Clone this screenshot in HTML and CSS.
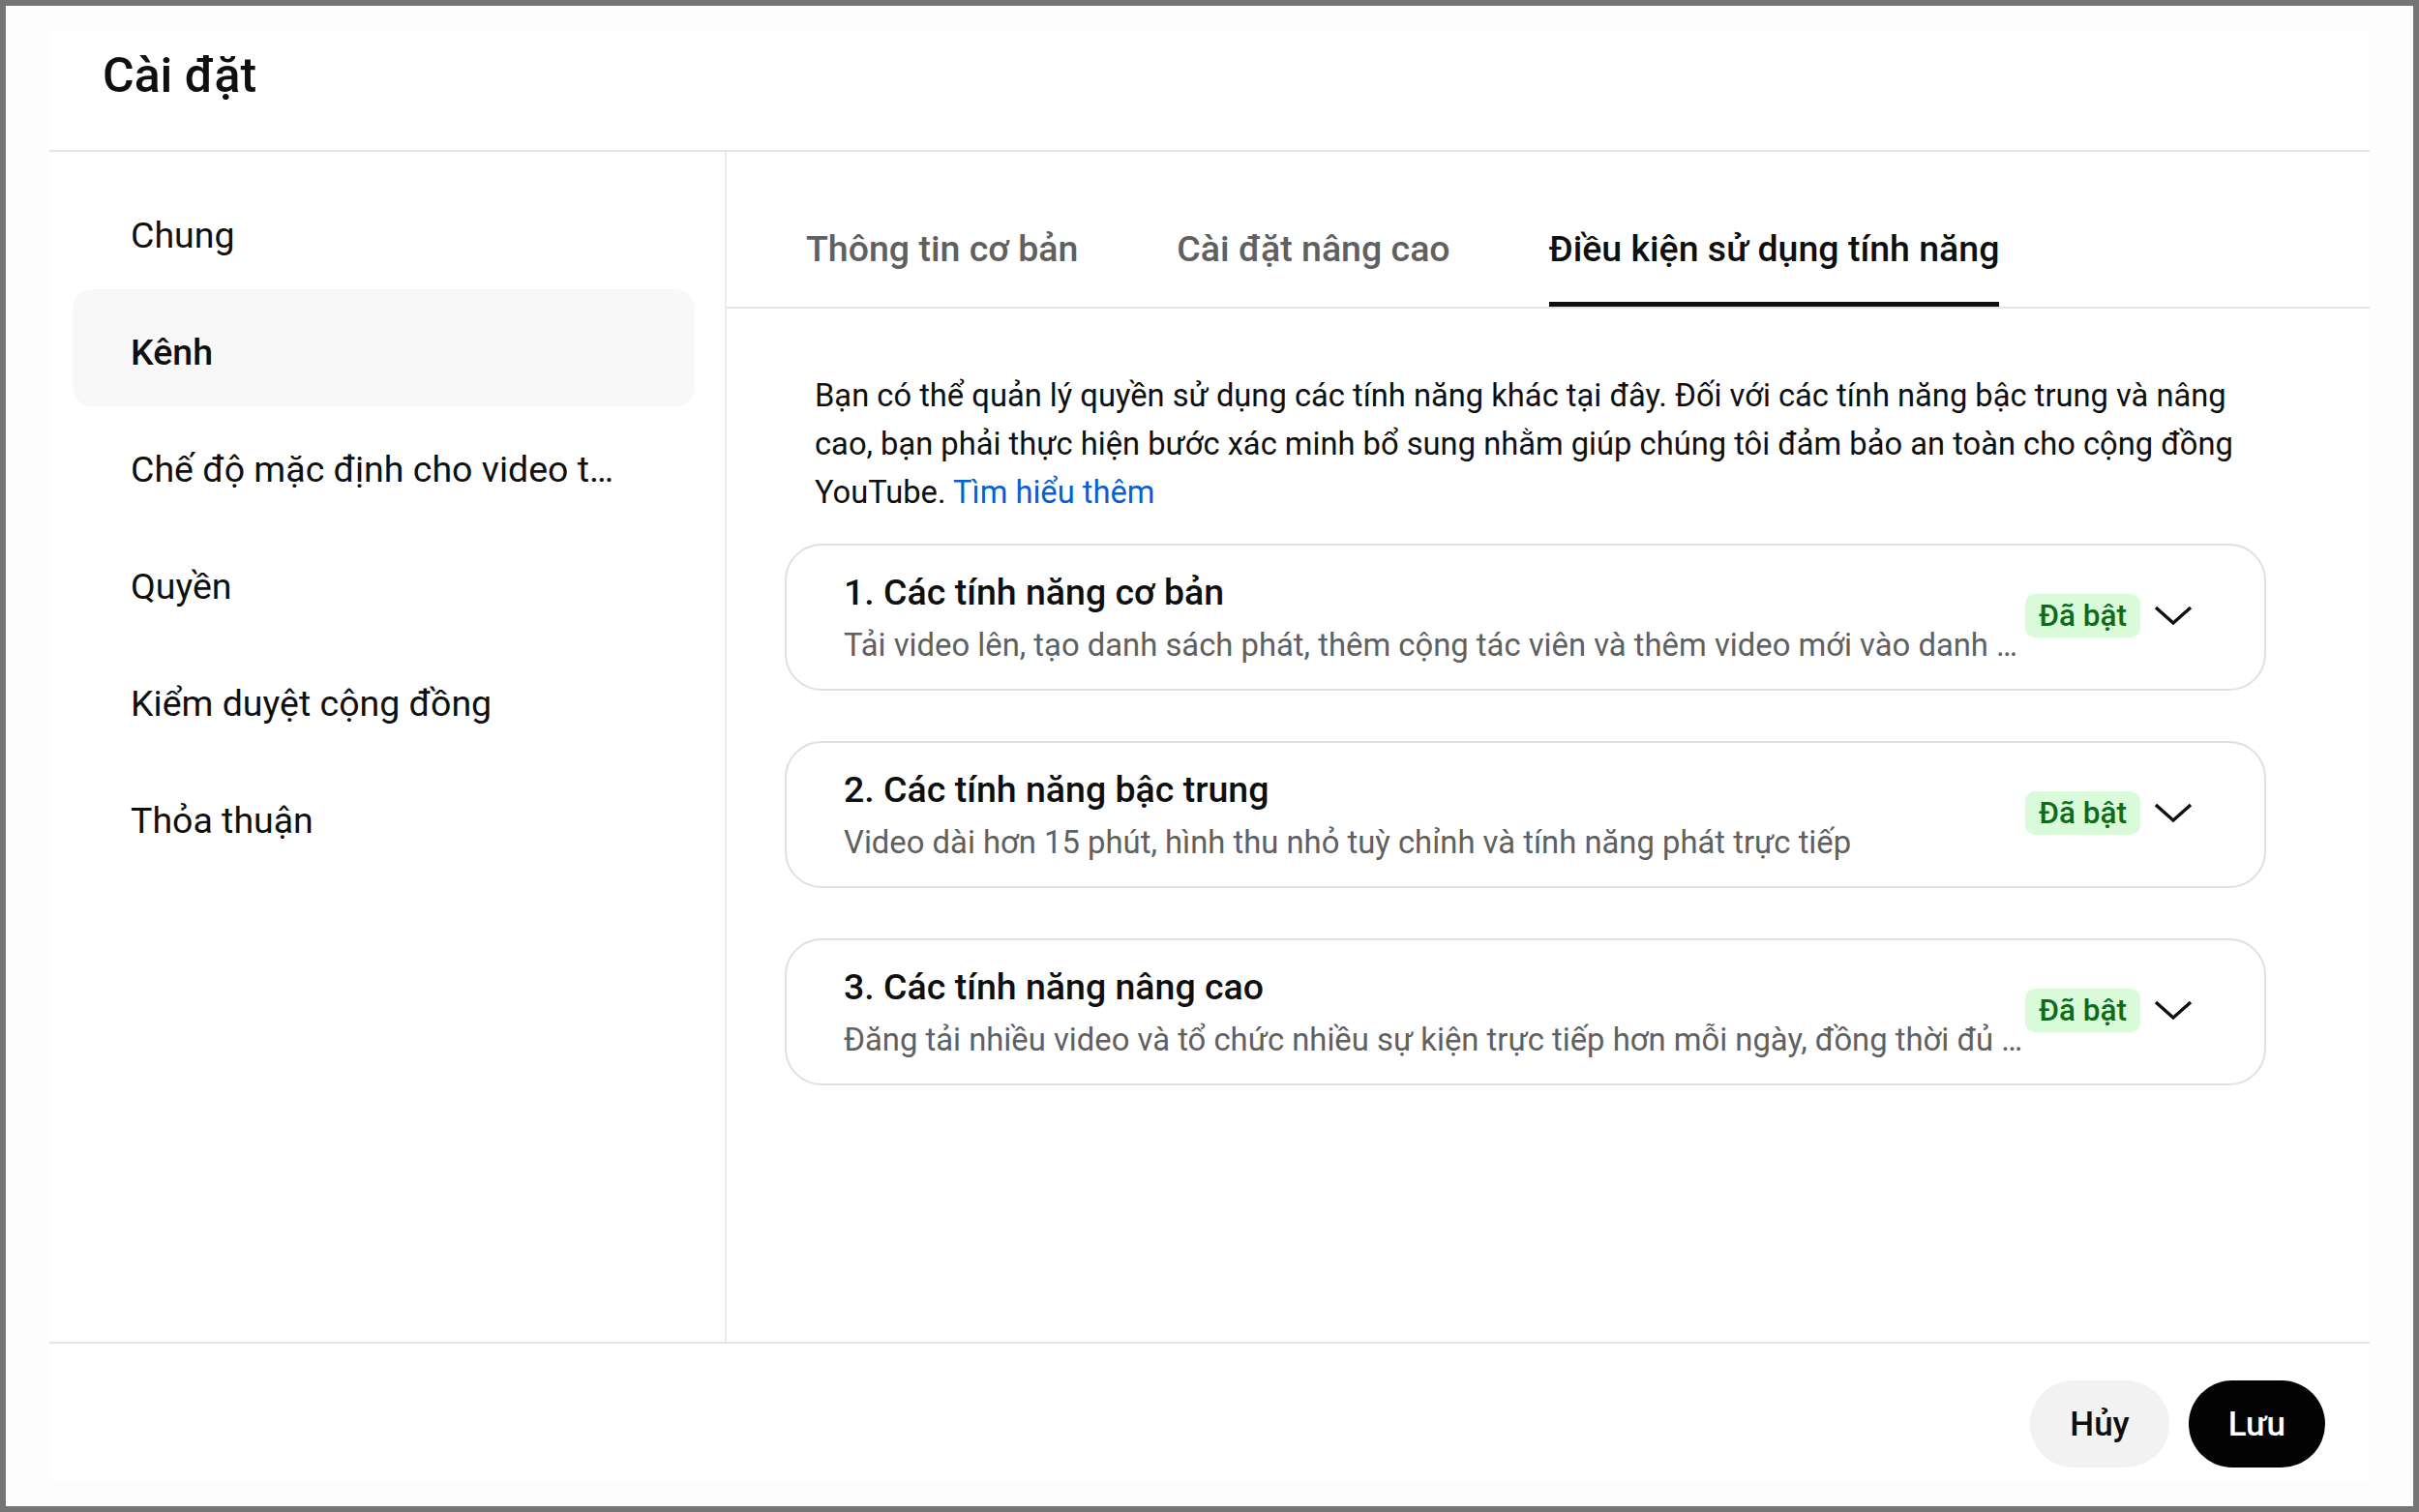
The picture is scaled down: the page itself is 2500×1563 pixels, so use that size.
FILE: index.html
```html
<!DOCTYPE html>
<html lang="vi">

<head>
    <meta charset="UTF-8" />
    <meta name="viewport" content="width=device-width, initial-scale=1.0" />
    <title>Cài đặt</title>
    <link rel="stylesheet" href="styles.css">
</head>

<body>
    <div class="frame">
        <div class="dialog">
            <div class="dialog-header">
                <h1>Cài đặt</h1>
            </div>

            <div class="dialog-body">
                <nav class="sidebar">
                    <div class="nav-item">Chung</div>
                    <div class="nav-item active">Kênh</div>
                    <div class="nav-item">Chế độ mặc định cho video tải lên</div>
                    <div class="nav-item">Quyền</div>
                    <div class="nav-item">Kiểm duyệt cộng đồng</div>
                    <div class="nav-item">Thỏa thuận</div>
                </nav>

                <main class="content">
                    <div class="tabs">
                        <div class="tab">Thông tin cơ bản</div>
                        <div class="tab">Cài đặt nâng cao</div>
                        <div class="tab active">Điều kiện sử dụng tính năng</div>
                    </div>

                    <div class="panel">
                        <p class="intro">
                            Bạn có thể quản lý quyền sử dụng các tính năng khác tại đây. Đối với các tính năng bậc trung và nâng cao, bạn phải thực hiện bước xác minh bổ sung nhằm giúp chúng tôi đảm bảo an toàn cho cộng đồng YouTube.
                            <a href="#" class="link">Tìm hiểu thêm</a>
                        </p>

                        <div class="feature-list">
                            <div class="feature">
                                <div class="feature-text">
                                    <div class="feature-title">1. Các tính năng cơ bản</div>
                                    <div class="feature-desc">Tải video lên, tạo danh sách phát, thêm cộng tác viên và thêm video mới vào danh sách phát</div>
                                </div>
                                <div class="feature-status">
                                    <span class="badge">Đã bật</span>
                                    <svg class="chevron" viewBox="0 0 60 60"><polyline points="12,22 30,38 48,22" /></svg>
                                </div>
                            </div>

                            <div class="feature">
                                <div class="feature-text">
                                    <div class="feature-title">2. Các tính năng bậc trung</div>
                                    <div class="feature-desc">Video dài hơn 15 phút, hình thu nhỏ tuỳ chỉnh và tính năng phát trực tiếp</div>
                                </div>
                                <div class="feature-status">
                                    <span class="badge">Đã bật</span>
                                    <svg class="chevron" viewBox="0 0 60 60"><polyline points="12,22 30,38 48,22" /></svg>
                                </div>
                            </div>

                            <div class="feature">
                                <div class="feature-text">
                                    <div class="feature-title">3. Các tính năng nâng cao</div>
                                    <div class="feature-desc">Đăng tải nhiều video và tổ chức nhiều sự kiện trực tiếp hơn mỗi ngày, đồng thời đủ điều kiện sử dụng các tính năng khác</div>
                                </div>
                                <div class="feature-status">
                                    <span class="badge">Đã bật</span>
                                    <svg class="chevron" viewBox="0 0 60 60"><polyline points="12,22 30,38 48,22" /></svg>
                                </div>
                            </div>
                        </div>
                    </div>
                </main>
            </div>

            <div class="dialog-footer">
                <button class="btn btn-cancel">Hủy</button>
                <button class="btn btn-save">Lưu</button>
            </div>
        </div>
    </div>
</body>

</html>
```

FILE: styles.css
```css
* {
    box-sizing: border-box;
}

body {
    margin: 0;
    font-family: Roboto, "Noto Sans", Arial, sans-serif;
    color: #0f0f0f;
}

.frame {
    height: 1563px;
    border: 6px solid #757575;
    background-color: #fdfdfd;
    padding: 27px 45px 27px 45px;
}

.dialog {
    height: 100%;
    background-color: #fff;
    display: flex;
    flex-direction: column;
}

.dialog-header {
    height: 124px;
    padding: 15px 0 0 55px;
    border-bottom: 2px solid #e5e5e5;
}

.dialog-header h1 {
    margin: 0;
    font-size: 50px;
    line-height: 60px;
    font-weight: 500;
}

.dialog-body {
    flex: 1;
    display: flex;
    min-height: 0;
}

.sidebar {
    width: 700px;
    flex-shrink: 0;
    padding: 21px 31px 0 24px;
    border-right: 2px solid #ececec;
}

.nav-item {
    height: 121px;
    line-height: 111px;
    padding: 10px 72px 0 60px;
    font-size: 37.5px;
    border-radius: 20px;
    white-space: nowrap;
    overflow: hidden;
    text-overflow: ellipsis;
}

.nav-item.active {
    background-color: #f8f8f8;
    font-weight: 500;
}

.content {
    flex: 1;
    min-width: 0;
}

.tabs {
    display: flex;
    gap: 102px;
    padding-left: 82px;
    border-bottom: 2px solid #e5e5e5;
}

.tab {
    padding-top: 75px;
    padding-bottom: 30px;
    line-height: 50px;
    font-size: 37.5px;
    font-weight: 500;
    color: #606060;
    border-bottom: 5px solid transparent;
}

.tab.active {
    color: #0f0f0f;
    border-bottom-color: #0f0f0f;
}

.panel {
    padding: 0 107px 0 60px;
}

.intro {
    margin: 65px 0 0;
    padding-left: 31px;
    font-size: 32.7px;
    line-height: 50px;
}

.link {
    color: #065fd4;
    text-decoration: none;
}

.feature-list {
    margin-top: 28px;
    display: flex;
    flex-direction: column;
    gap: 52px;
}

.feature {
    height: 152px;
    display: flex;
    padding: 23px 64px 25px 59px;
    border: 2px solid #e0e0e0;
    border-radius: 38px;
}

.feature-text {
    flex: 1;
    min-width: 0;
}

.feature-title {
    font-size: 37.5px;
    font-weight: 500;
    line-height: 50px;
}

.feature-desc {
    margin-top: 10px;
    font-size: 32.8px;
    line-height: 40px;
    color: #606060;
    white-space: nowrap;
    overflow: hidden;
    text-overflow: ellipsis;
}

.feature-status {
    display: flex;
    align-items: center;
    align-self: flex-start;
    margin-top: 19px;
}

.badge {
    height: 45px;
    line-height: 45px;
    padding: 0 14px;
    border-radius: 10px;
    background-color: #dafbd9;
    color: #0f6b1c;
    font-size: 31.5px;
    font-weight: 500;
}

.chevron {
    width: 60px;
    height: 60px;
    margin-left: 4px;
    fill: none;
    stroke: #0f0f0f;
    stroke-width: 3.4;
}

.dialog-footer {
    height: 143px;
    display: flex;
    justify-content: flex-end;
    align-items: flex-start;
    gap: 20px;
    padding: 38px 46px 0 0;
    border-top: 2px solid #e5e5e5;
}

.btn {
    height: 90px;
    padding: 0 41px;
    border: none;
    border-radius: 45px;
    font-family: inherit;
    font-size: 35px;
    font-weight: 500;
    cursor: pointer;
}

.btn-cancel {
    background-color: #f2f2f2;
    color: #0f0f0f;
}

.btn-save {
    background-color: #030303;
    color: #fff;
}
```
